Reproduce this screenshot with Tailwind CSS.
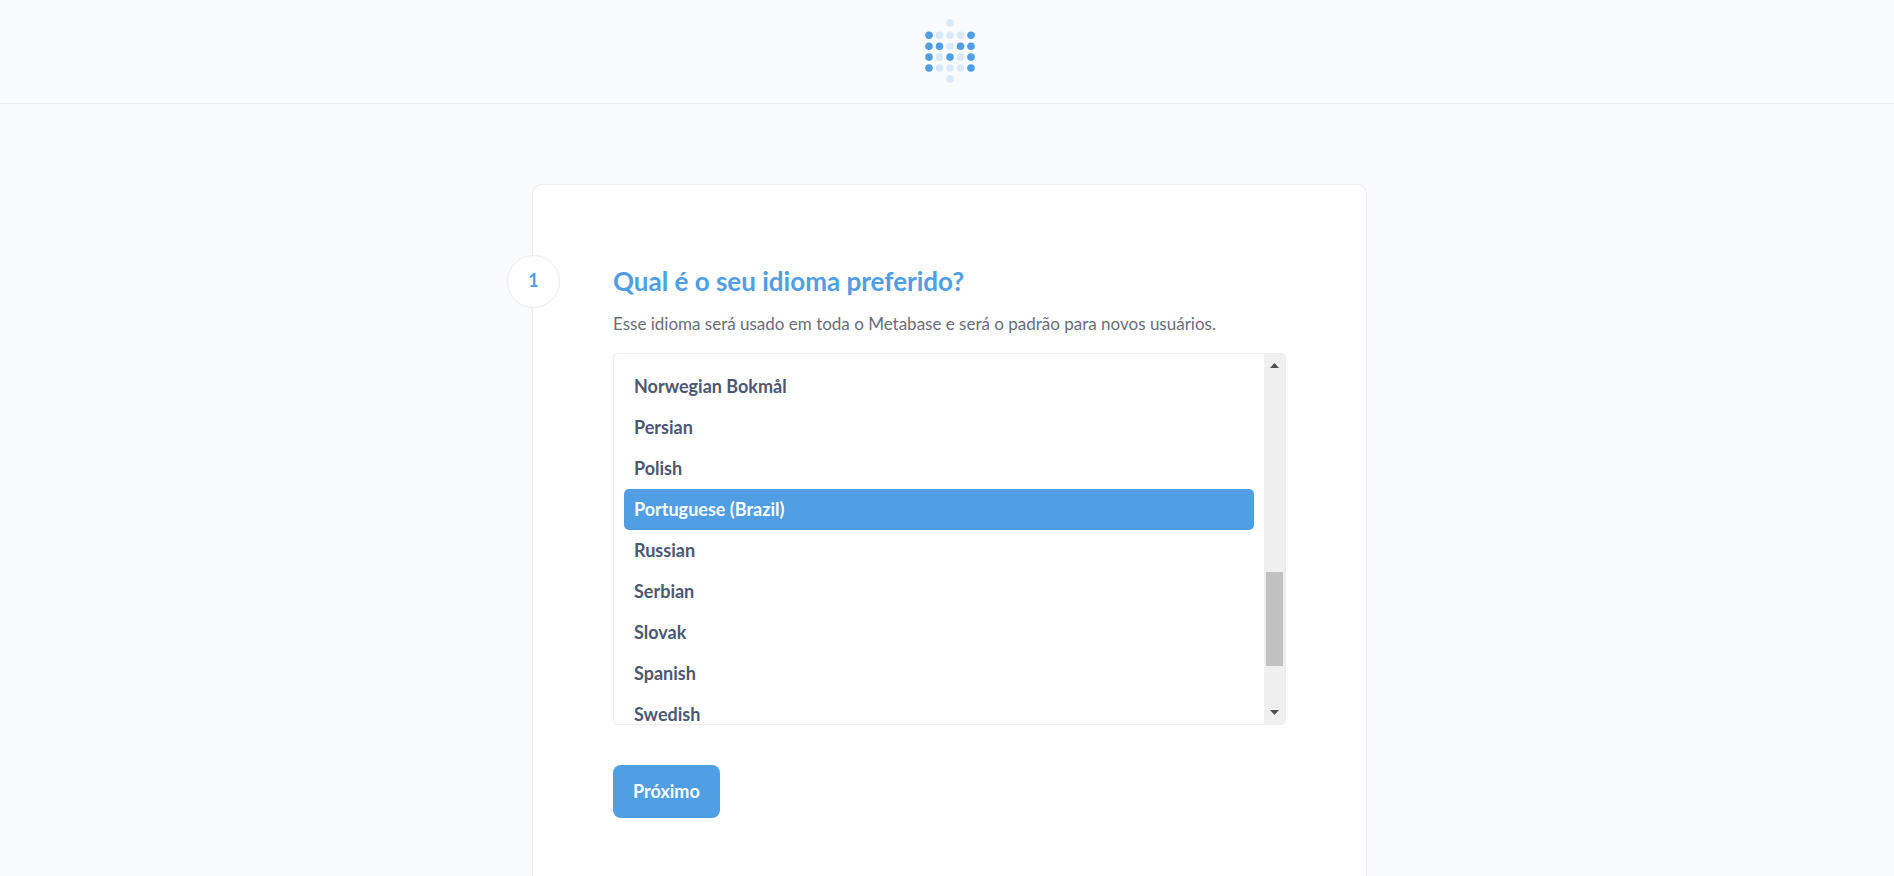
<!DOCTYPE html>
<html lang="pt-BR">
<head>
<meta charset="utf-8">
<meta name="viewport" content="width=device-width, initial-scale=1">
<title>Metabase</title>
<script src="https://cdn.jsdelivr.net/npm/@tailwindcss/browser@4"></script>
</head>
<body class="flex h-screen flex-col overflow-hidden bg-[#f9fbfd] pl-[5px] font-['Lato',sans-serif] text-lg text-[#4c5773]">
<header class="-ml-[5px] flex h-[104px] shrink-0 justify-center border-b border-[#eeecec] pt-[18px] pl-[5px]">
  <svg width="52" height="66" viewBox="0 0 52 66" role="img" aria-label="Metabase">
    <g fill="#d9e9f7">
      <circle cx="26" cy="5" r="3.8"/>
      <circle cx="15.5" cy="17.3" r="3.8"/><circle cx="26" cy="17.3" r="3.8"/><circle cx="36.5" cy="17.3" r="3.8"/>
      <circle cx="26" cy="28.2" r="3.8"/>
      <circle cx="15.5" cy="39.1" r="3.8"/><circle cx="36.5" cy="39.1" r="3.8"/>
      <circle cx="15.5" cy="50" r="3.8"/><circle cx="26" cy="50" r="3.8"/><circle cx="36.5" cy="50" r="3.8"/>
      <circle cx="26" cy="61" r="3.8"/>
    </g>
    <g fill="#509ee3">
      <circle cx="5" cy="17.3" r="3.8"/><circle cx="47" cy="17.3" r="3.8"/>
      <circle cx="5" cy="28.2" r="3.8"/><circle cx="15.5" cy="28.2" r="3.8"/><circle cx="36.5" cy="28.2" r="3.8"/><circle cx="47" cy="28.2" r="3.8"/>
      <circle cx="5" cy="39.1" r="3.8"/><circle cx="26" cy="39.1" r="3.8"/><circle cx="47" cy="39.1" r="3.8"/>
      <circle cx="5" cy="50" r="3.8"/><circle cx="47" cy="50" r="3.8"/>
    </g>
  </svg>
</header>
<main class="flex grow justify-center px-8 pt-20">
  <section class="relative w-full max-w-[835px] rounded-t-[10px] border border-b-0 border-[#eeecec] bg-white px-20 pt-20">
    <div class="absolute top-[70px] -left-[26px] flex size-[53px] items-center justify-center rounded-full border border-[#eeecec] bg-white pb-[3px] font-bold text-[#509ee3]">1</div>
    <h1 id="language-title" class="text-[26px] leading-8 font-bold text-[#509ee3]">Qual é o seu idioma preferido?</h1>
    <p class="mt-3 text-[17px] leading-[30px] text-[#696e7b]">Esse idioma será usado em toda o Metabase e será o padrão para novos usuários.</p>
    <div class="mt-[14px] flex h-[372px] overflow-hidden rounded-[5px] border border-[#eeecec]">
      <div role="radiogroup" aria-labelledby="language-title" class="flex h-full grow flex-col overflow-hidden px-[10px] pt-3 font-bold">
        <label class="flex h-[41px] shrink-0 items-center rounded-[5px] px-[10px] pb-0.5 has-checked:bg-[#509ee3] has-checked:text-white"><input type="radio" name="language" class="size-0 appearance-none">Norwegian Bokmål</label>
        <label class="flex h-[41px] shrink-0 items-center rounded-[5px] px-[10px] pb-0.5 has-checked:bg-[#509ee3] has-checked:text-white"><input type="radio" name="language" class="size-0 appearance-none">Persian</label>
        <label class="flex h-[41px] shrink-0 items-center rounded-[5px] px-[10px] pb-0.5 has-checked:bg-[#509ee3] has-checked:text-white"><input type="radio" name="language" class="size-0 appearance-none">Polish</label>
        <label class="flex h-[41px] shrink-0 items-center rounded-[5px] px-[10px] pb-0.5 has-checked:bg-[#509ee3] has-checked:text-white"><input type="radio" name="language" class="size-0 appearance-none" checked>Portuguese (Brazil)</label>
        <label class="flex h-[41px] shrink-0 items-center rounded-[5px] px-[10px] pb-0.5 has-checked:bg-[#509ee3] has-checked:text-white"><input type="radio" name="language" class="size-0 appearance-none">Russian</label>
        <label class="flex h-[41px] shrink-0 items-center rounded-[5px] px-[10px] pb-0.5 has-checked:bg-[#509ee3] has-checked:text-white"><input type="radio" name="language" class="size-0 appearance-none">Serbian</label>
        <label class="flex h-[41px] shrink-0 items-center rounded-[5px] px-[10px] pb-0.5 has-checked:bg-[#509ee3] has-checked:text-white"><input type="radio" name="language" class="size-0 appearance-none">Slovak</label>
        <label class="flex h-[41px] shrink-0 items-center rounded-[5px] px-[10px] pb-0.5 has-checked:bg-[#509ee3] has-checked:text-white"><input type="radio" name="language" class="size-0 appearance-none">Spanish</label>
        <label class="flex h-[41px] shrink-0 items-center rounded-[5px] px-[10px] pb-0.5 has-checked:bg-[#509ee3] has-checked:text-white"><input type="radio" name="language" class="size-0 appearance-none">Swedish</label>
      </div>
      <div class="flex w-[21px] shrink-0 flex-col items-center bg-[#f0f0f0] py-[9px] pr-px" aria-hidden="true">
        <svg width="9" height="5" viewBox="0 0 9 5" fill="#505050"><path d="M4.5 0 9 5H0z"/></svg>
        <div class="mt-[204px] h-[94px] w-[17px] bg-[#c1c1c1]"></div>
        <svg class="mt-auto" width="9" height="5" viewBox="0 0 9 5" fill="#505050"><path d="M0 0h9L4.500 5z"/></svg>
      </div>
    </div>
    <button type="button" class="mt-10 flex h-[53px] items-center rounded-lg bg-[#509ee3] px-5 pb-0.5 font-bold text-white">Próximo</button>
  </section>
</main>
</body>
</html>
